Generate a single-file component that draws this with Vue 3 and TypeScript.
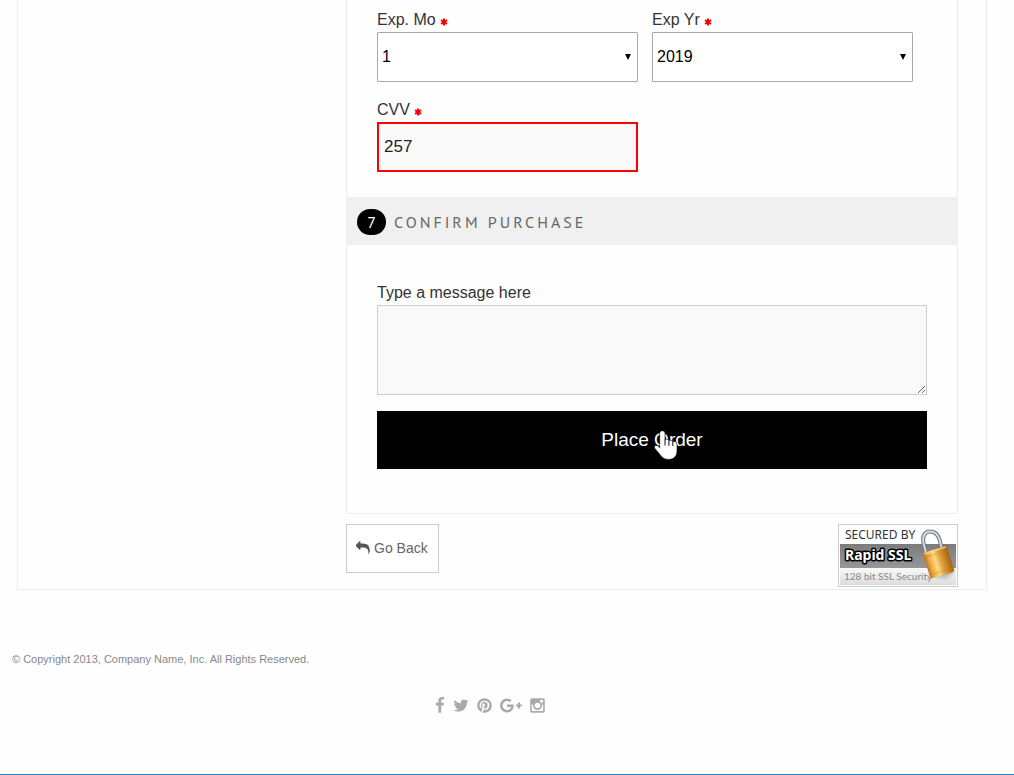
<script setup lang="ts">
import { ref } from 'vue'

interface SocialLink {
  name: string
  width: number
  box: string
  path: string
}

const month = ref('1')
const year = ref('2019')
const cvv = ref('257')
const message = ref('')

const months: string[] = Array.from({ length: 12 }, (_, i) => String(i + 1))
const years: string[] = Array.from({ length: 10 }, (_, i) => String(2019 + i))

const social: SocialLink[] = [
  {
    name: 'Facebook',
    width: 10,
    box: '400 0 1024 1792',
    path: 'M1343 12v264h-157q-86 0-116 36t-30 108v189h293l-39 296h-254v759h-306v-759h-255v-296h255v-218q0-186 104-288.5t277-102.5q147 0 228 12z',
  },
  {
    name: 'Twitter',
    width: 16,
    box: '64 0 1664 1792',
    path: 'M1684 408q-67 98-162 167 1 14 1 42 0 130-38 259.5t-115.5 248.5-184.5 210.5-258 146-323 54.5q-271 0-496-145 35 4 78 4 225 0 401-138-105-2-188-64.5t-114-159.5q33 5 61 5 43 0 85-11-112-23-185.5-111.5t-73.5-205.5v-4q68 38 146 41-66-44-105-115t-39-154q0-88 44-163 121 149 294.5 238.5t371.5 99.5q-8-38-8-74 0-134 94.5-228.5t228.5-94.5q140 0 236 102 109-21 205-78-37 115-142 178 93-10 186-50z',
  },
  {
    name: 'Pinterest',
    width: 15,
    box: '128 0 1536 1792',
    path: 'M1664 896q0 209-103 385.5t-279.5 279.5-385.5 103q-111 0-218-32 59-93 78-164 9-34 54-211 20 39 73 67.5t114 28.5q121 0 216-68.5t147-188.5 52-270q0-114-59.5-214t-172.5-163-255-63q-105 0-196 29t-154.5 77-109 110.5-67 129.5-21.5 134q0 104 40 183t117 111q30 12 38-20 2-7 8-31t8-30q6-23-11-43-51-61-51-151 0-151 104.5-259.5t273.5-108.5q151 0 235.5 82t84.5 213q0 170-68.5 289t-175.5 119q-61 0-98-43.5t-23-104.5q8-35 26.5-93.5t30-103 11.5-75.5q0-50-27-83t-77-33q-62 0-105 57t-43 142q0 73 25 122l-99 418q-17 70-13 177-206-91-333-281t-127-423q0-209 103-385.5t279.5-279.5 385.5-103 385.5 103 279.5 279.5 103 385.5z',
  },
  {
    name: 'Google Plus',
    width: 22,
    box: '0 0 2304 1792',
    path: 'M1437 913q0 208-87 370.5t-248 254-369 91.5q-149 0-285-58t-234-156-156-234-58-285 58-285 156-234 234-156 285-58q286 0 491 192l-199 191q-117-113-292-113-123 0-227.5 62t-165.5 168.5-61 232.5 61 232.5 165.5 168.5 227.5 62q83 0 152.5-23t114.5-57.5 78.5-78.5 49-83 21.5-74h-416v-252h692q12 63 12 122zm867-122v210h-209v209h-210v-209h-209v-210h209v-209h210v209h209z',
  },
  {
    name: 'Instagram',
    width: 15,
    box: '128 0 1536 1792',
    path: 'M1490 1426v-648h-135q20 63 20 131 0 126-64 232.5t-174 168.5-240 62q-197 0-337-135.5t-140-327.5q0-68 20-131h-141v648q0 26 17.5 43.5t43.5 17.5h1069q25 0 43-17.5t18-43.5zm-284-533q0-124-90.5-211.5t-218.5-87.5q-127 0-217.5 87.5t-90.5 211.5 90.5 211.5 217.5 87.5q128 0 218.5-87.5t90.5-211.5zm284-360v-165q0-28-20-48.5t-49-20.5h-174q-29 0-49 20.5t-20 48.5v165q0 29 20 49t49 20h174q29 0 49-20t20-49zm174-208v1142q0 81-58 139t-139 58h-1142q-81 0-139-58t-58-139v-1142q0-81 58-139t139-58h1142q81 0 139 58t58 139z',
  },
]
</script>

<template>
  <div class="page">
    <main class="panel">
      <div class="checkout">
        <form class="card" @submit.prevent>
          <div class="fields">
            <div class="field">
              <label for="exp-month">Exp. Mo
                <svg class="star" viewBox="0 0 8 8" aria-hidden="true"><path d="M4 .5v7M1 2.2l6 3.6M7 2.2L1 5.8" /></svg>
              </label>
              <div class="select-wrap">
                <select id="exp-month" v-model="month">
                  <option v-for="m in months" :key="m">{{ m }}</option>
                </select>
              </div>
            </div>
            <div class="field">
              <label for="exp-year">Exp Yr
                <svg class="star" viewBox="0 0 8 8" aria-hidden="true"><path d="M4 .5v7M1 2.2l6 3.6M7 2.2L1 5.8" /></svg>
              </label>
              <div class="select-wrap">
                <select id="exp-year" v-model="year">
                  <option v-for="y in years" :key="y">{{ y }}</option>
                </select>
              </div>
            </div>
            <div class="field">
              <label for="cvv">CVV
                <svg class="star" viewBox="0 0 8 8" aria-hidden="true"><path d="M4 .5v7M1 2.2l6 3.6M7 2.2L1 5.8" /></svg>
              </label>
              <input id="cvv" v-model="cvv" type="text" />
            </div>
          </div>

          <h2 class="step"><span class="number">7</span>CONFIRM PURCHASE</h2>

          <div class="confirm">
            <label for="message">Type a message here</label>
            <textarea id="message" v-model="message"></textarea>
            <button class="order" type="submit">
              Place Order
              <svg class="pointer" viewBox="0 0 24 30" aria-hidden="true">
                <path
                  d="M8.300 .8c1.600 0 2.700 1 2.700 2.500v6.500c.5-.4 1-.6 1.600-.6 1.200 0 2 .7 2.300 1.600.5-.4 1-.5 1.600-.5 1.200 0 2 .7 2.300 1.700.4-.3.9-.4 1.400-.4 1.700 0 2.800 1 2.800 2.500v7c0 5-3.200 8.300-8.200 8.300-3.800 0-6.400-1.300-8.300-4.200L.9 18.400c-.8-1.200-.5-2.300.5-2.800 1-.5 2.300-.1 3.200.9l1.100 1.200V3.300c0-1.500 1.100-2.500 2.600-2.500z"
                  fill="#fff"
                  stroke="#000"
                  stroke-width=".6"
                />
                <path d="M11 9.500v6M14.900 10.800v5M18.800 12v4" stroke="#111" fill="none" />
              </svg>
            </button>
          </div>
        </form>

        <div class="below">
          <button class="back" type="button">
            <svg viewBox="0 0 1792 1792" aria-hidden="true">
              <path d="M1792 1120q0 166-127 451-3 7-10.500 24t-13.500 30-13 22q-12 17-28 17-15 0-23.500-10t-8.500-25q0-9 2.500-26.500t2.500-23.500q5-68 5-123 0-112-19.500-200.500t-54-153.500-89-112-117.500-77.500-145.500-47.500-167.500-24-193-7h-224v256q0 26-19 45t-45 19-45-19l-512-512q-19-19-19-45t19-45l512-512q19-19 45-19t45 19 19 45v256h224q713 0 875 403 53 134 53 333z" />
            </svg>
            Go Back
          </button>

          <svg class="seal" viewBox="0 0 120 63" role="img" aria-label="Secured by Rapid SSL">
            <defs>
              <linearGradient id="band" x1="0" y1="0" x2="0" y2="1">
                <stop offset="0" stop-color="#7c7c7c" />
                <stop offset="1" stop-color="#979797" />
              </linearGradient>
              <linearGradient id="foot" x1="0" y1="0" x2="0" y2="1">
                <stop offset="0" stop-color="#fafafa" />
                <stop offset="1" stop-color="#dcdcdc" />
              </linearGradient>
              <linearGradient id="gold" x1="0" y1="0" x2="1" y2="0">
                <stop offset="0" stop-color="#b9741b" />
                <stop offset=".15" stop-color="#e9a63a" />
                <stop offset=".4" stop-color="#ffd982" />
                <stop offset=".65" stop-color="#dc9a35" />
                <stop offset="1" stop-color="#a5620f" />
              </linearGradient>
              <radialGradient id="glow">
                <stop offset=".5" stop-color="#777" stop-opacity=".5" />
                <stop offset="1" stop-color="#777" stop-opacity="0" />
              </radialGradient>
            </defs>
            <rect x=".5" y=".5" width="119" height="62" fill="#fff" stroke="#ccc" />
            <rect x="2" y="20" width="116" height="24" fill="url(#band)" />
            <rect x="2" y="44" width="116" height="17" fill="url(#foot)" />
            <text class="seal-top" x="7" y="15">SECURED BY</text>
            <text class="seal-name" x="7" y="36">Rapid SSL</text>
            <text class="seal-foot" x="6" y="56">128 bit SSL Security</text>
            <ellipse cx="105" cy="44" rx="14" ry="13" fill="url(#glow)" />
            <path d="M88 29L85.500 19C84 12 87 7.500 92 7.500c5 0 8 3 9.500 8L104 25" fill="none" stroke="#6f7780" stroke-width="4" />
            <path d="M88 29L85.500 19C84 12 87 7.500 92 7.500c5 0 8 3 9.500 8L104 25" fill="none" stroke="#d5dbe0" stroke-width="2" />
            <g transform="rotate(-17 100 38)">
              <rect x="88" y="25" width="25" height="27" rx="2" fill="url(#gold)" />
              <path d="M89 30h23M89 48h23" stroke="#b97820" stroke-opacity=".4" />
              <path d="M89 26h23" stroke="#ffe09a" />
            </g>
          </svg>
        </div>
      </div>
    </main>

    <footer class="footer">
      <p>© Copyright 2013, Company Name, Inc. All Rights Reserved.</p>
      <nav class="social" aria-label="Social media">
        <a v-for="s in social" :key="s.name" href="#" :aria-label="s.name">
          <svg :viewBox="s.box" :width="s.width" height="17"><path :d="s.path" /></svg>
        </a>
      </nav>
    </footer>
  </div>
</template>

<style>
body {
  margin: 0;
  background: #fefefe;
}
</style>

<style scoped>
.page {
  display: flex;
  flex-direction: column;
  box-sizing: border-box;
  min-height: 100vh;
  border-bottom: 1px solid #1a86d0;
  font-family: "Liberation Sans", Arial, sans-serif;
  font-size: 16px;
  color: #333;
}

.page *,
.page *::after {
  box-sizing: border-box;
}

.panel {
  display: grid;
  grid-template-columns: minmax(0, 328fr) minmax(0, 612fr);
  margin: 0 27px 0 17px;
  padding: 0 28px 2px 0;
  border: 1px solid #eee;
  border-top: 0;
}

.checkout {
  grid-column: 2;
}

.card {
  padding-bottom: 44px;
  border: 1px solid #eee;
  border-top: 0;
}

.fields {
  display: grid;
  grid-template-columns: 1fr 1fr;
  row-gap: 16px;
  padding: 8px 30px 25px;
}

.field {
  padding-right: 14px;
}

label {
  display: block;
  line-height: 24px;
}

.star {
  width: 8px;
  height: 8px;
  margin-bottom: -1px;
  fill: none;
  stroke: #f00;
  stroke-width: 2;
}

.select-wrap {
  position: relative;
}

.select-wrap::after {
  content: "";
  position: absolute;
  top: 22px;
  right: 7px;
  border: 3px solid transparent;
  border-top: 6px solid #000;
  border-bottom: 0;
  pointer-events: none;
}

select,
input {
  display: block;
  width: 100%;
  height: 50px;
  margin: 0;
  font-family: inherit;
}

select {
  appearance: none;
  padding: 0 4px 2px;
  border: 1px solid #a9a9a9;
  border-radius: 1px;
  background: #fff;
  color: #000;
  font-size: 16px;
}

input {
  padding: 0 5px;
  border: 2px solid #f00;
  background: #f9f9f9;
  color: #222;
  font-size: 17px;
}

.step {
  display: flex;
  align-items: center;
  gap: 8px;
  height: 48px;
  margin: 0;
  padding: 2px 10px 0;
  background: #f0f0f0;
  color: #666;
  font-family: "PT Sans", "Noto Sans", sans-serif;
  font-size: 16px;
  font-weight: 400;
  letter-spacing: 3px;
}

.number {
  width: 29px;
  border-radius: 13px;
  background: #000;
  color: #fff;
  letter-spacing: 0;
  line-height: 26px;
  text-align: center;
}

.confirm {
  padding: 36px 30px 0;
}

textarea {
  display: block;
  width: 100%;
  height: 90px;
  margin: 0 0 16px;
  border: 1px solid #ccc;
  background: #f9f9f9;
  font: inherit;
}

.order {
  position: relative;
  display: block;
  width: 100%;
  height: 58px;
  padding: 0;
  border: 0;
  background: #000;
  color: #fff;
  font-family: inherit;
  font-size: 19px;
}

.pointer {
  position: absolute;
  top: 19px;
  left: calc(50% + 2px);
  width: 24px;
  height: 30px;
}

.below {
  display: flex;
  align-items: flex-start;
  justify-content: space-between;
  padding-top: 10px;
}

.back {
  display: flex;
  align-items: center;
  gap: 4px;
  height: 49px;
  padding: 0 10px 2px 9px;
  border: 1px solid #ccc;
  background: #fff;
  color: #666;
  font-family: inherit;
  font-size: 14px;
}

.back svg {
  width: 14px;
  height: 14px;
  fill: #555;
}

.seal {
  width: 120px;
  height: 63px;
  font-family: "Noto Sans", sans-serif;
}

.seal-top {
  fill: #333;
  font-size: 12px;
}

.seal-name {
  fill: #fff;
  stroke: #000;
  stroke-width: 3px;
  stroke-linejoin: round;
  paint-order: stroke;
  font-size: 14px;
  font-weight: 700;
}

.seal-foot {
  fill: #888;
  font-family: Lato, sans-serif;
  font-size: 10px;
}

.footer {
  padding: 59px 12px 58px;
}

.footer p {
  margin: 0;
  color: #888;
  font-size: 11px;
  line-height: 20px;
}

.social {
  display: flex;
  justify-content: center;
  gap: 8px;
  margin-top: 28px;
  padding-right: 34px;
}

.social a {
  display: flex;
}

.social svg {
  fill: #aaa;
}
</style>
